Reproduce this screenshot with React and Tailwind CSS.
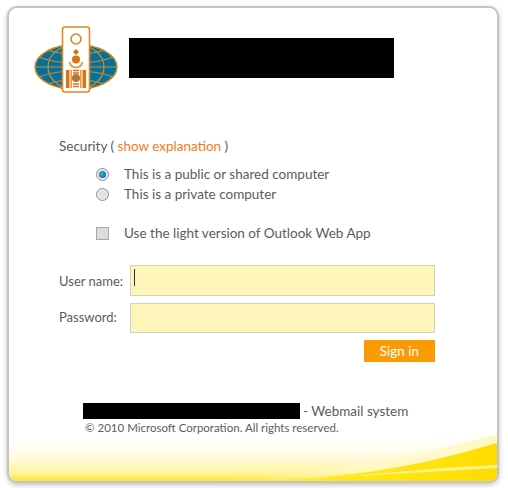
const Logo = () => (
  <svg width="84" height="68" viewBox="0 0 84 68" className="shrink-0">
    <ellipse cx="42" cy="41" rx="41" ry="22.5" fill="#04719f" stroke="#d98a1e" strokeWidth="1.5" />
    <g fill="none" stroke="#d98a1e" strokeWidth="1.2">
      <ellipse cx="42" cy="41" rx="28" ry="22.5" />
      <path d="M2 41h80" />
      <path d="M5 31c12 5 24 6 37 6s25-1 37-6" />
      <path d="M5 51c12-5 24-6 37-6s25 1 37 6" />
      <path d="M14 24c8 3 18 4 28 4s20-1 28-4" />
      <path d="M14 58c8-3 18-4 28-4s20 1 28 4" />
    </g>
    <rect x="28.500" y="1" width="27" height="65" rx="2.500" fill="#fff" stroke="#dd8a1f" strokeWidth="1.600" />
    <circle cx="42" cy="13" r="5" fill="#fff" stroke="#dd8a1f" strokeWidth="1.600" />
    <path d="M42 23l3 3-3 3-3-3z" fill="#d9730f" />
    <circle cx="42" cy="33.500" r="4" fill="#d9730f" />
    <path d="M35.500 36c1 4 3.500 5.500 6.500 5.500s5.500-1.500 6.500-5.500" fill="none" stroke="#e0a050" strokeWidth="2" />
    <rect x="32" y="44" width="3.500" height="18" fill="#d9730f" />
    <rect x="48.500" y="44" width="3.500" height="18" fill="#d9730f" />
    <rect x="36.500" y="44" width="1.500" height="18" fill="#e59a45" />
    <rect x="46" y="44" width="1.500" height="18" fill="#e59a45" />
    <circle cx="42" cy="52" r="3.500" fill="#9a7a50" stroke="#d9730f" strokeWidth="1.200" />
    <path d="M39 44.500h6M39 47h6M39 58h6M39 60.500h6" stroke="#d9730f" strokeWidth="1.500" />
  </svg>
);

const Swoosh = () => (
  <svg viewBox="0 0 488 50" preserveAspectRatio="none" className="absolute bottom-0 left-0 h-[50px] w-full">
    <defs>
      <linearGradient id="fade" x1="0" y1="0" x2="0" y2="1">
        <stop offset="0" stopColor="#fff" stopOpacity="0" />
        <stop offset="0.55" stopColor="#fffbdc" />
        <stop offset="0.85" stopColor="#fff49a" />
        <stop offset="1" stopColor="#ffe32e" />
      </linearGradient>
      <linearGradient id="band" x1="0" y1="0" x2="1" y2="0">
        <stop offset="0" stopColor="#ffe600" stopOpacity="0" />
        <stop offset="0.3" stopColor="#ffe600" stopOpacity="0.8" />
        <stop offset="1" stopColor="#ffdc00" />
      </linearGradient>
      <linearGradient id="haze" x1="0" y1="0" x2="1" y2="0">
        <stop offset="0" stopColor="#fff" stopOpacity="0" />
        <stop offset="1" stopColor="#fff6a0" stopOpacity="0.7" />
      </linearGradient>
    </defs>
    <rect width="488" height="50" fill="url(#fade)" />
    <path d="M200 50C300 44 400 26 488 4V50Z" fill="url(#haze)" />
    <path d="M260 50C340 46 410 36 488 12V50Z" fill="url(#band)" />
    <path d="M330 46C390 41 440 36 488 34V37C430 40 385 43 330 46Z" fill="#fff7a0" opacity="0.85" />
  </svg>
);

const Radio = ({ checked }) => (
  <span className="flex h-[13px] w-[13px] shrink-0 items-center justify-center rounded-full border border-[#8f8f8f] bg-[#e2e2e2] shadow-[inset_0_0_2px_#fff]">
    {checked && <span className="h-[7px] w-[7px] rounded-full bg-[radial-gradient(circle_at_40%_40%,#35b6e8,#04527c)]" />}
  </span>
);

const App = () => {
  return (
    <div className="h-[488px] w-[508px] bg-white pl-[7px] pt-[6px] text-[#5c5c5c] [font-family:'Lato',sans-serif]">
      <div className="relative h-[477px] w-[492px] overflow-hidden rounded-[10px] border-2 border-[#c4c4c4] bg-white shadow-[0_2px_5px_rgba(0,0,0,0.25)]">
        <Swoosh />
        <div className="relative">
          <div className="flex items-start pl-[25px] pt-[18px]">
            <Logo />
            <div className="ml-[11px] mt-[12px] h-[40px] w-[265px] bg-black" />
          </div>

          <p className="ml-[50px] mt-[43px] text-[13.5px] leading-[18px]">
            Security ( <span className="text-[#f47b20]">show explanation</span> )
          </p>

          <div className="ml-[87px] mt-[9px] flex items-center gap-[15px] text-[13.5px] leading-[20px]">
            <Radio checked />
            <span>This is a public or shared computer</span>
          </div>
          <div className="ml-[87px] flex items-center gap-[15px] text-[13.5px] leading-[20px]">
            <Radio />
            <span>This is a private computer</span>
          </div>

          <div className="ml-[87px] mt-[19px] flex items-center gap-[15px] text-[13.5px] leading-[20px]">
            <span className="h-[13px] w-[13px] shrink-0 border border-[#a8a8a8] bg-[#dcdcdc]" />
            <span>Use the light version of Outlook Web App</span>
          </div>

          <div className="ml-[50px] mt-[22px] flex items-center">
            <label className="w-[71px] pt-[3px] text-[13px]">User name:</label>
            <div className="flex h-[31px] w-[305px] items-start border border-[#d2d0c0] bg-[#fef5b9] pl-[3px] pt-[3px]">
              <span className="h-[17px] w-px bg-[#333]" />
            </div>
          </div>
          <div className="ml-[50px] mt-[7px] flex items-center">
            <label className="w-[71px] text-[13px]">Password:</label>
            <div className="h-[30px] w-[305px] border border-[#d2d0c0] bg-[#fef5b9]" />
          </div>
          <div className="ml-[355px] mt-[7px] flex h-[22px] w-[71px] items-center justify-center bg-[#f99b05] text-[13.5px] text-white">
            Sign in
          </div>

          <div className="ml-[74px] mt-[41px] flex items-center">
            <div className="h-[16px] w-[217px] bg-black" />
            <span className="ml-[3px] text-[13.5px] leading-[16px]">- Webmail system</span>
          </div>
          <p className="ml-[76px] mt-[1px] text-[11.5px] leading-[16px]">© 2010 Microsoft Corporation. All rights reserved.</p>
        </div>
      </div>
    </div>
  );
};

export default App;
